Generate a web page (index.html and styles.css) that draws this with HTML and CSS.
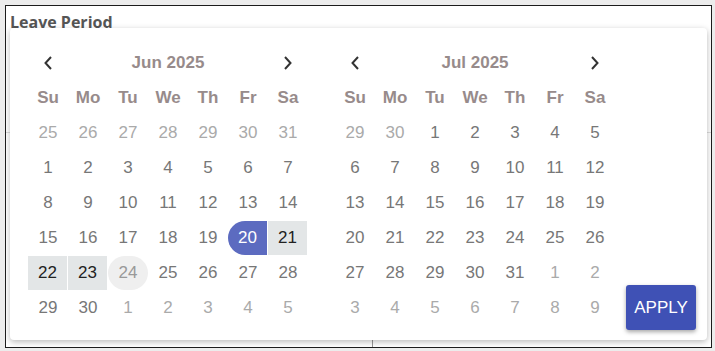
FILE: index.html
```html
<!DOCTYPE html>
<html lang="en">
<head>
    <meta charset="UTF-8">
    <title>Leave Period</title>
    <link rel="stylesheet" href="styles.css">
</head>
<body>
    <div class="frame">
        <div class="field-label">Leave Period</div>
        <div class="table-behind">
            <div class="table-col"></div>
            <div class="table-col"></div>
        </div>

        <!-- date range picker dropdown -->
        <div class="picker">
            <div class="month">
                <div class="month-head">
                    <span class="nav"><svg width="8" height="14" viewBox="0 0 8 14"><polyline points="7,1 1.5,7 7,13" fill="none" stroke="#333" stroke-width="2"/></svg></span>
                    <span class="month-title">Jun 2025</span>
                    <span class="nav"><svg width="8" height="14" viewBox="0 0 8 14"><polyline points="1,1 6.5,7 1,13" fill="none" stroke="#333" stroke-width="2"/></svg></span>
                </div>
                <div class="days">
                    <span class="wd">Su</span><span class="wd">Mo</span><span class="wd">Tu</span><span class="wd">We</span><span class="wd">Th</span><span class="wd">Fr</span><span class="wd">Sa</span>
                    <span class="day off">25</span><span class="day off">26</span><span class="day off">27</span><span class="day off">28</span><span class="day off">29</span><span class="day off">30</span><span class="day off">31</span>
                    <span class="day">1</span><span class="day">2</span><span class="day">3</span><span class="day">4</span><span class="day">5</span><span class="day">6</span><span class="day">7</span>
                    <span class="day">8</span><span class="day">9</span><span class="day">10</span><span class="day">11</span><span class="day">12</span><span class="day">13</span><span class="day">14</span>
                    <span class="day">15</span><span class="day">16</span><span class="day">17</span><span class="day">18</span><span class="day">19</span><span class="day start">20</span><span class="day range">21</span>
                    <span class="day range">22</span><span class="day range">23</span><span class="day hover">24</span><span class="day">25</span><span class="day">26</span><span class="day">27</span><span class="day">28</span>
                    <span class="day">29</span><span class="day">30</span><span class="day off">1</span><span class="day off">2</span><span class="day off">3</span><span class="day off">4</span><span class="day off">5</span>
                </div>
            </div>

            <div class="month">
                <div class="month-head">
                    <span class="nav"><svg width="8" height="14" viewBox="0 0 8 14"><polyline points="7,1 1.5,7 7,13" fill="none" stroke="#333" stroke-width="2"/></svg></span>
                    <span class="month-title">Jul 2025</span>
                    <span class="nav"><svg width="8" height="14" viewBox="0 0 8 14"><polyline points="1,1 6.5,7 1,13" fill="none" stroke="#333" stroke-width="2"/></svg></span>
                </div>
                <div class="days">
                    <span class="wd">Su</span><span class="wd">Mo</span><span class="wd">Tu</span><span class="wd">We</span><span class="wd">Th</span><span class="wd">Fr</span><span class="wd">Sa</span>
                    <span class="day off">29</span><span class="day off">30</span><span class="day">1</span><span class="day">2</span><span class="day">3</span><span class="day">4</span><span class="day">5</span>
                    <span class="day">6</span><span class="day">7</span><span class="day">8</span><span class="day">9</span><span class="day">10</span><span class="day">11</span><span class="day">12</span>
                    <span class="day">13</span><span class="day">14</span><span class="day">15</span><span class="day">16</span><span class="day">17</span><span class="day">18</span><span class="day">19</span>
                    <span class="day">20</span><span class="day">21</span><span class="day">22</span><span class="day">23</span><span class="day">24</span><span class="day">25</span><span class="day">26</span>
                    <span class="day">27</span><span class="day">28</span><span class="day">29</span><span class="day">30</span><span class="day">31</span><span class="day off">1</span><span class="day off">2</span>
                    <span class="day off">3</span><span class="day off">4</span><span class="day off">5</span><span class="day off">6</span><span class="day off">7</span><span class="day off">8</span><span class="day off">9</span>
                </div>
            </div>

            <button class="apply-btn">APPLY</button>
        </div>
    </div>
</body>
</html>
```

FILE: styles.css
```css
* {
    margin: 0;
    padding: 0;
    box-sizing: border-box;
}

body {
    background-color: #ececec;
    font-family: 'Liberation Sans', Arial, sans-serif;
    padding: 5px 3px 3px 5px;
}

.frame {
    position: relative;
    background-color: white;
    border: 1px solid #1c1c1c;
    height: 343px;
    overflow: hidden;
}

.field-label {
    font-family: 'Open Sans', sans-serif;
    font-weight: bold;
    font-size: 16px;
    color: #555;
    padding: 3px 0 0 4px;
    line-height: 26px;
}

.table-behind {
    display: grid;
    grid-template-columns: 367px 1fr;
    margin-top: 97px;
    border-top: 1px solid #dddddd;
    height: 220px;
}

.table-col:first-child {
    border-right: 1px solid #999;
}

.picker {
    position: absolute;
    left: 4px;
    top: 22px;
    width: 697px;
    height: 312px;
    background-color: white;
    border-radius: 4px;
    box-shadow: 0 2px 6px rgba(0, 0, 0, 0.28);
    display: flex;
    align-items: flex-start;
    gap: 27px;
    padding: 17px 0 0 18px;
}

.month {
    width: 280px;
}

.month-head {
    display: grid;
    grid-template-columns: 40px 1fr 40px;
    height: 35px;
    align-items: center;
}

.nav {
    display: flex;
    justify-content: center;
    align-items: center;
}

.month-title {
    text-align: center;
    font-weight: bold;
    font-size: 17px;
    color: #978b8b;
}

.days {
    display: grid;
    grid-template-columns: repeat(7, 40px);
    grid-auto-rows: 34px;
    row-gap: 1px;
    padding-top: 1px;
}

.wd,
.day {
    display: flex;
    justify-content: center;
    align-items: center;
    font-size: 17px;
}

.wd {
    font-weight: bold;
    color: #978b8b;
}

.day {
    color: #777;
}

.day.off {
    color: #aaa;
}

.day.start {
    background-color: #5c6bc0;
    color: white;
    border-radius: 17px 0 0 17px;
    margin-right: 1px;
}

.day.range {
    background-color: #e3e6e7;
    color: #222;
    margin-right: 1px;
}

.day.hover {
    background-color: #efefef;
    color: #999;
    border-radius: 17px;
}

.apply-btn {
    align-self: flex-end;
    margin: 0 0 10px -16px;
    width: 70px;
    height: 45px;
    background-color: #3f51b5;
    color: white;
    border: none;
    border-radius: 3px;
    font-family: 'Liberation Sans', Arial, sans-serif;
    font-size: 17px;
    box-shadow: 0 2px 4px rgba(0, 0, 0, 0.35);
}
```
